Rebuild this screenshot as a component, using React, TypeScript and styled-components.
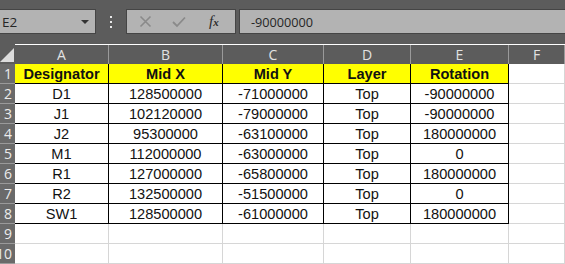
import React from 'react'
import styled, { createGlobalStyle } from 'styled-components'

const GlobalStyle = createGlobalStyle`
  html, body {
    margin: 0;
    padding: 0;
    background: #ffffff;
  }
`

const Page = styled.div`
  width: 565px;
  height: 264px;
  overflow: hidden;
  display: flex;
  flex-direction: column;
  background: #ffffff;
`

const Toolbar = styled.div`
  height: 44px;
  flex-shrink: 0;
  background: #5c5c5c;
  display: flex;
  align-items: flex-start;
  padding-top: 9px;
  box-sizing: border-box;
`

const NameBox = styled.div`
  width: 96px;
  height: 25px;
  box-sizing: border-box;
  background: #b3b3b3;
  border: 1px solid #454545;
  border-left: none;
  display: flex;
  align-items: center;
  justify-content: space-between;
  padding: 0 6px 0 2px;
  font-family: 'Open Sans', 'DejaVu Sans', sans-serif;
  font-size: 13.5px;
  color: #262626;
`

const DropArrow = styled.span`
  width: 0;
  height: 0;
  border-left: 4px solid transparent;
  border-right: 4px solid transparent;
  border-top: 4px solid #333333;
`

const Grip = styled.div`
  width: 30px;
  height: 25px;
  display: flex;
  flex-direction: column;
  align-items: center;
  justify-content: center;
  gap: 3px;

  span {
    width: 2px;
    height: 2px;
    background: #e8e8e8;
  }
`

const ButtonsBox = styled.div`
  width: 110px;
  height: 25px;
  box-sizing: border-box;
  background: #b3b3b3;
  border: 1px solid #454545;
  display: flex;
  align-items: center;
  padding: 0 0 0 12px;
  gap: 20px;
`

const FxLabel = styled.span`
  font-family: 'Liberation Serif', 'DejaVu Serif', serif;
  font-style: italic;
  font-size: 15px;
  color: #2a2a2a;
  margin-left: 3px;

  small {
    font-size: 11px;
    font-weight: bold;
  }
`

const FormulaInput = styled.div`
  flex: 1;
  height: 25px;
  margin-left: 3px;
  box-sizing: border-box;
  background: #b3b3b3;
  border: 1px solid #454545;
  border-right: none;
  display: flex;
  align-items: center;
  padding-left: 11px;
  font-family: 'Open Sans', 'DejaVu Sans', sans-serif;
  font-size: 12.7px;
  color: #262626;
`

const Sheet = styled.div`
  display: grid;
  grid-template-columns: 15px 94px 114px 101px 87px 98px 1fr;
  grid-auto-rows: 20px;
`

const Corner = styled.div`
  background: #5c5c5c;
  display: flex;
  align-items: flex-end;
  justify-content: flex-end;
  padding: 0 1px 2px 0;
`

const ColHeader = styled.div`
  background: #5c5c5c;
  border-right: 1px solid #9a9a9a;
  box-sizing: border-box;
  margin-top: 1px;
  display: flex;
  align-items: center;
  justify-content: center;
  font-family: 'Open Sans', 'DejaVu Sans', sans-serif;
  font-size: 14px;
  color: #e2e2e2;
  &:last-child {
    border-right: none;
  }
`

const RowHeader = styled.div`
  background: #6a6a6a;
  border-bottom: 1px solid #9a9a9a;
  box-sizing: border-box;
  overflow: hidden;
  display: flex;
  align-items: center;
  justify-content: flex-end;
  padding-right: 3px;
  font-family: 'Open Sans', 'DejaVu Sans', sans-serif;
  font-size: 14px;
  color: #ececec;
  white-space: nowrap;
`

const Cell = styled.div<{ $boxed?: boolean; $head?: boolean }>`
  box-sizing: border-box;
  background: ${(p) => (p.$head ? '#ffff00' : '#ffffff')};
  border-right: 1px solid ${(p) => (p.$boxed ? '#000000' : '#d6d6d6')};
  border-bottom: 1px solid ${(p) => (p.$boxed ? '#000000' : '#d6d6d6')};
  display: flex;
  align-items: center;
  justify-content: center;
  font-family: 'Liberation Sans', Arial, sans-serif;
  font-size: 14.6px;
  font-weight: ${(p) => (p.$head ? 'bold' : 'normal')};
  color: #111111;
  white-space: nowrap;
  overflow: hidden;
`

const columns = ['A', 'B', 'C', 'D', 'E', 'F']

const header = ['Designator', 'Mid X', 'Mid Y', 'Layer', 'Rotation']

const rows = [
  ['D1', '128500000', '-71000000', 'Top', '-90000000'],
  ['J1', '102120000', '-79000000', 'Top', '-90000000'],
  ['J2', '95300000', '-63100000', 'Top', '180000000'],
  ['M1', '112000000', '-63000000', 'Top', '0'],
  ['R1', '127000000', '-65800000', 'Top', '180000000'],
  ['R2', '132500000', '-51500000', 'Top', '0'],
  ['SW1', '128500000', '-61000000', 'Top', '180000000'],
]

function CrossIcon() {
  return (
    <svg width="13" height="13" viewBox="0 0 13 13">
      <path d="M1.5 1.5 L11.5 11.5 M11.5 1.5 L1.5 11.5" stroke="#8a8a8a" strokeWidth="1.6" fill="none" />
    </svg>
  )
}

function CheckIcon() {
  return (
    <svg width="14" height="12" viewBox="0 0 14 12">
      <path d="M1 6 L5 10 L13 1.5" stroke="#8a8a8a" strokeWidth="1.8" fill="none" />
    </svg>
  )
}

function SelectAll() {
  return (
    <svg width="14" height="14" viewBox="0 0 14 14">
      <polygon points="14,0 14,14 0,14" fill="#dcdcdc" />
    </svg>
  )
}

export default function App() {
  const body: string[][] = [header, ...rows, ['', '', '', '', ''], ['', '', '', '', '']]

  return (
    <>
      <GlobalStyle />
      <Page>
        <Toolbar>
          <NameBox>
            <span>E2</span>
            <DropArrow />
          </NameBox>
          <Grip>
            <span />
            <span />
            <span />
          </Grip>
          <ButtonsBox>
            <CrossIcon />
            <CheckIcon />
            <FxLabel>
              f<small>x</small>
            </FxLabel>
          </ButtonsBox>
          <FormulaInput>-90000000</FormulaInput>
        </Toolbar>
        <Sheet>
          <Corner>
            <SelectAll />
          </Corner>
          {columns.map((c) => (
            <ColHeader key={c}>{c}</ColHeader>
          ))}
          {body.map((r, i) => {
            const inTable = i < 8
            return (
              <React.Fragment key={i}>
                <RowHeader>{i + 1}</RowHeader>
                {r.map((v, j) => (
                  <Cell key={j} $boxed={inTable} $head={i === 0}>
                    {v}
                  </Cell>
                ))}
                <Cell />
              </React.Fragment>
            )
          })}
        </Sheet>
      </Page>
    </>
  )
}
